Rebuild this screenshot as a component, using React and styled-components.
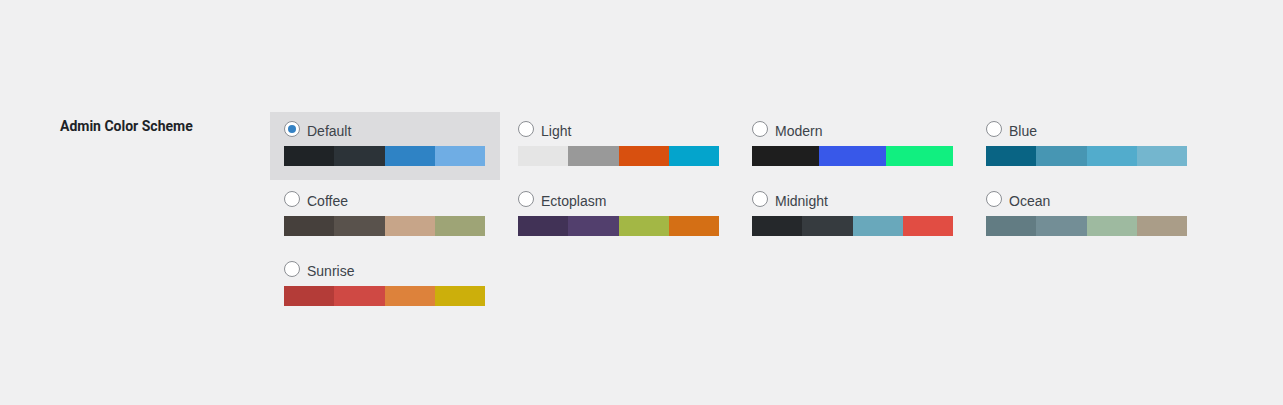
import React from "react";
import styled, { createGlobalStyle } from "styled-components";

const GlobalStyle = createGlobalStyle`
  html, body {
    margin: 0;
    padding: 0;
    background: #f0f0f1;
  }
  body {
    font-family: "Liberation Sans", Arial, sans-serif;
    -webkit-font-smoothing: antialiased;
  }
`;

const Page = styled.div`
  min-height: 405px;
  box-sizing: border-box;
  padding: 112px 0 0 60px;
`;

const FieldRow = styled.div`
  display: flex;
  align-items: flex-start;
`;

const FieldLabel = styled.div`
  width: 210px;
  flex: none;
  margin-top: 5px;
  font-family: Roboto, "Liberation Sans", Arial, sans-serif;
  font-size: 14px;
  line-height: 18px;
  font-weight: 700;
  color: #1d2327;
`;

const OptionGrid = styled.div`
  display: grid;
  grid-template-columns: repeat(4, 230px);
  column-gap: 4px;
  row-gap: 2px;
`;

const Option = styled.label`
  display: block;
  box-sizing: border-box;
  height: 68px;
  padding: 5px 15px 14px 14px;
  background: ${(p) => (p.$selected ? "#dcdcde" : "transparent")};
  cursor: pointer;
`;

const OptionHead = styled.div`
  display: flex;
  align-items: flex-start;
  height: 29px;
`;

const Radio = styled.span`
  flex: none;
  box-sizing: border-box;
  width: 16px;
  height: 16px;
  margin-top: 4px;
  margin-right: 7px;
  border-radius: 50%;
  border: 1px solid #8c8f94;
  background: #fff;
  display: flex;
  align-items: center;
  justify-content: center;

  &::before {
    content: "";
    display: ${(p) => (p.$checked ? "block" : "none")};
    width: 8px;
    height: 8px;
    border-radius: 50%;
    background: #3582c4;
  }
`;

const OptionName = styled.span`
  padding-top: 4px;
  font-size: 14px;
  line-height: 20px;
  color: #3c434a;
`;

const Palette = styled.div`
  display: flex;
  height: 20px;
`;

const Swatch = styled.div`
  flex: 1;
  background: ${(p) => p.$color};
`;

const schemes = [
  { name: "Default", colors: ["#1f2326", "#2c3338", "#2f83c5", "#6fade4"], selected: true },
  { name: "Light", colors: ["#e5e5e5", "#999999", "#d8500f", "#04a4cc"] },
  { name: "Modern", colors: ["#1e1e1e", "#3858e9", "#11ef80"] },
  { name: "Blue", colors: ["#096484", "#4796b3", "#52accc", "#74b6ce"] },
  { name: "Coffee", colors: ["#46403c", "#59524c", "#c7a589", "#9ea476"] },
  { name: "Ectoplasm", colors: ["#413256", "#523f6d", "#a3b745", "#d46f15"] },
  { name: "Midnight", colors: ["#25282b", "#363b3f", "#69a8bb", "#e14d43"] },
  { name: "Ocean", colors: ["#627c83", "#738e96", "#9ebaa0", "#aa9d88"] },
  { name: "Sunrise", colors: ["#b43c38", "#cf4944", "#dd823b", "#ccaf0b"] },
];

export default function App() {
  return (
    <>
      <GlobalStyle />
      <Page>
        <FieldRow>
          <FieldLabel>Admin Color Scheme</FieldLabel>
          <OptionGrid>
            {schemes.map((s) => (
              <Option key={s.name} $selected={s.selected}>
                <OptionHead>
                  <Radio $checked={s.selected} />
                  <OptionName>{s.name}</OptionName>
                </OptionHead>
                <Palette>
                  {s.colors.map((c, i) => (
                    <Swatch key={i} $color={c} />
                  ))}
                </Palette>
              </Option>
            ))}
          </OptionGrid>
        </FieldRow>
      </Page>
    </>
  );
}
